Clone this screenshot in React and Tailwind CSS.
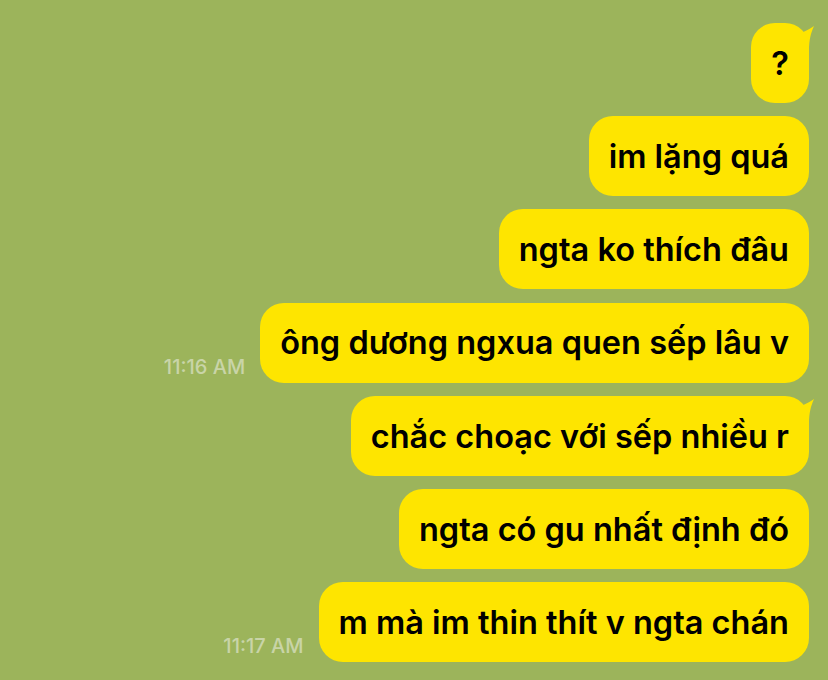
const MESSAGES = [
  { text: "?", tail: true },
  { text: "im lặng quá" },
  { text: "ngta ko thích đâu" },
  { text: "ông dương ngxua quen sếp lâu v", time: "11:16 AM" },
  { text: "chắc choạc với sếp nhiều r", tail: true },
  { text: "ngta có gu nhất định đó" },
  { text: "m mà im thin thít v ngta chán", time: "11:17 AM" },
];

function Bubble({ text, tail }) {
  return (
    <div className="relative">
      {tail && (
        <svg className="absolute -right-[6px] top-[2px]" width="22" height="26" viewBox="0 0 22 26">
          <path d="M0 10 C8 8 14 6 21 1 C18 8 16 14 16 26 L0 26 Z" fill="#fee500" />
        </svg>
      )}
      <div className="relative h-[80px] rounded-[24px] bg-[#fee500] px-[20px] pt-[2px] flex items-center text-[32.5px] font-semibold text-black leading-none">
        {text}
      </div>
    </div>
  );
}

export default function App() {
  return (
    <div
      className="w-[828px] h-[680px] overflow-hidden bg-[#9cb45b] flex flex-col items-end gap-[13.2px] pt-[23px] pr-[19px]"
      style={{ fontFamily: "Inter, 'Noto Sans', sans-serif" }}
    >
      {MESSAGES.map((m, i) => (
        <div key={i} className="flex items-end gap-[15px]">
          {m.time && (
            <span className="mb-[1px] text-[20px] font-medium text-[#c9d4a8]">{m.time}</span>
          )}
          <Bubble text={m.text} tail={m.tail} />
        </div>
      ))}
    </div>
  );
}
